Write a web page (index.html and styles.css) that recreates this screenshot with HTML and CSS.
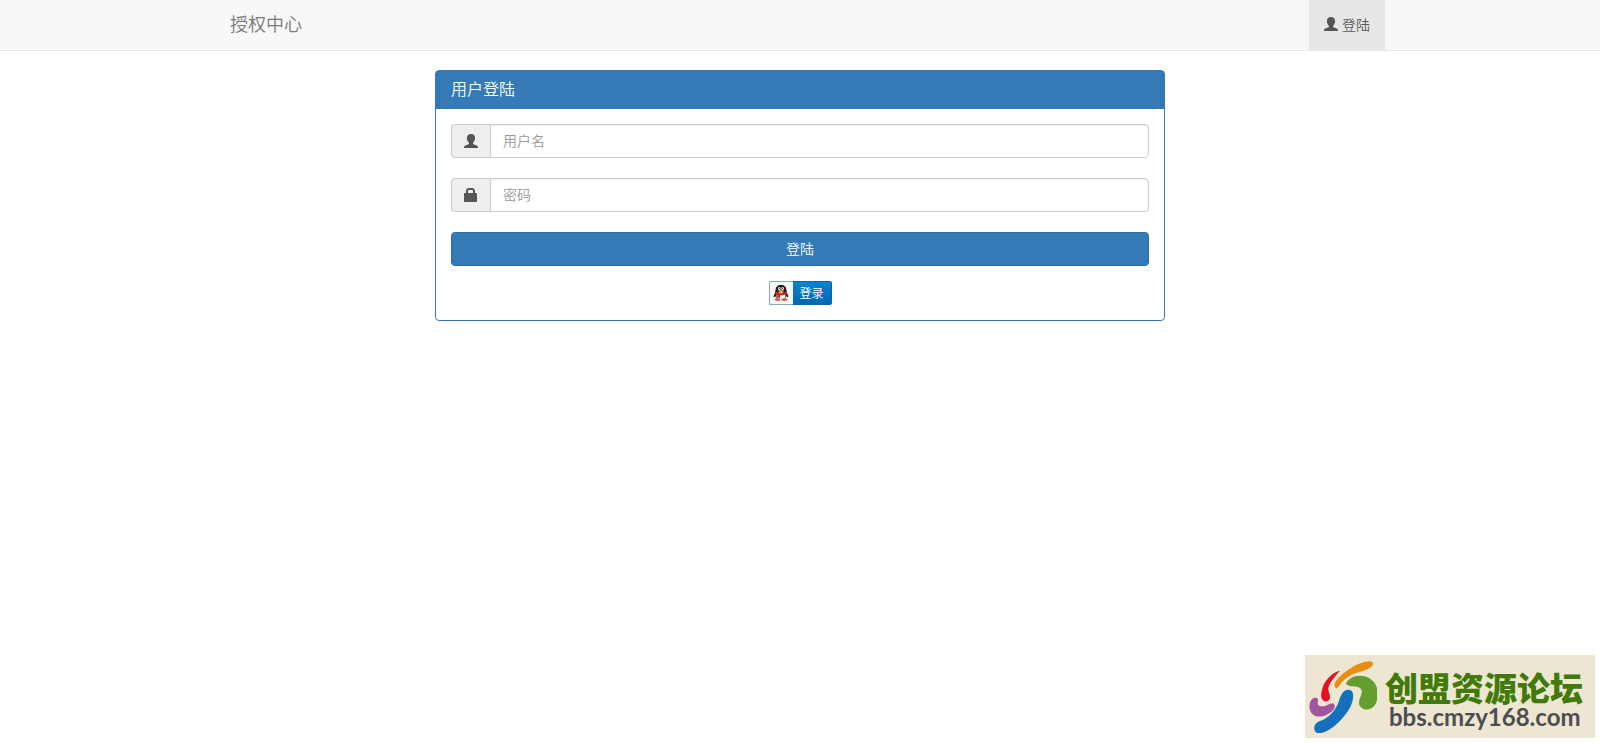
FILE: index.html
```html
<!DOCTYPE html>
<html lang="zh-CN">
<head>
  <meta charset="UTF-8">
  <meta name="viewport" content="width=device-width, initial-scale=1">
  <title>用户登陆</title>
  <link rel="stylesheet" href="styles.css">
</head>
<body>

  <svg width="0" height="0" class="sprite" aria-hidden="true">
    <symbol id="icon-user" viewBox="0 0 14 14">
      <path d="M7 0C9.5 0 11 1.4 11 3.6C11 4 11 4.2 10.9 4.5C11.3 4.6 11.3 5.8 10.6 6.3C10.3 7.4 9.8 8.2 9.1 8.8V10C9.4 10.5 11.3 10.9 12.6 11.5C13.5 11.9 14 12.4 14 14H0C0 12.4 .5 11.9 1.4 11.5C2.7 10.9 4.6 10.5 4.9 10V8.8C4.2 8.2 3.7 7.4 3.4 6.3C2.7 5.8 2.7 4.6 3.1 4.5C3 4.2 3 4 3 3.6C3 1.4 4.5 0 7 0Z"/>
    </symbol>
    <symbol id="icon-lock" viewBox="0 0 14 14">
      <path fill-rule="evenodd" d="M2 5V3C2 1 3.4 0 5 0H8C9.600 0 11 1 11 3V5H12.2C12.8 5 13 5.2 13 5.8V13.2C13 13.8 12.8 14 12.2 14H.8C.2 14 0 13.8 0 13.2V5.8C0 5.2 .2 5 .8 5ZM4 5H9V3.400C9 2.500 8.500 2 7.700 2H5.300C4.500 2 4 2.500 4 3.400Z"/>
    </symbol>
  </svg>

  <nav class="navbar">
    <div class="container navbar-inner">
      <a href="#" class="navbar-brand">授权中心</a>
      <a href="#" class="navbar-link active"><svg class="icon"><use href="#icon-user"/></svg> 登陆</a>
    </div>
  </nav>

  <div class="container">
    <div class="login-col">
      <div class="panel">
        <h3 class="panel-heading">用户登陆</h3>
        <form class="panel-body">
          <div class="input-group">
            <label class="input-addon" for="user"><svg class="icon"><use href="#icon-user"/></svg></label>
            <input type="text" id="user" class="form-control" placeholder="用户名" aria-label="用户名">
          </div>
          <div class="input-group">
            <label class="input-addon" for="pass"><svg class="icon"><use href="#icon-lock"/></svg></label>
            <input type="password" id="pass" class="form-control" placeholder="密码" aria-label="密码">
          </div>
          <button type="submit" class="btn">登陆</button>
          <a href="#" class="qq-login">
            <span class="qq-icon">
              <svg width="16" height="18" viewBox="0 0 16 18">
                <path d="M3 8C1.600 9.500 .4 11.500 .8 13C1.600 13.400 2.300 12.800 2.800 12ZM13 8C14.400 9.500 15.600 11.500 15.200 13C14.400 13.400 13.700 12.800 13.200 12Z" fill="#2b1714"/>
                <path d="M8 1C11.400 1 13.400 3 13.400 6C14.600 9 14.200 16 8 16S1.400 9 2.600 6C2.600 3 4.600 1 8 1Z" fill="#1d1a1c"/>
                <ellipse cx="8" cy="12" rx="4.600" ry="4" fill="#fff"/>
                <ellipse cx="6.400" cy="4.400" rx="1.300" ry="1.500" fill="#fff"/>
                <ellipse cx="9.600" cy="4.400" rx="1.300" ry="1.500" fill="#fff"/>
                <circle cx="6.700" cy="4.500" r=".5"/>
                <circle cx="9.300" cy="4.500" r=".5"/>
                <ellipse cx="8" cy="7" rx="3" ry="1" fill="#f39a1e"/>
                <path d="M2.600 7.600C6 9.400 10 9.400 13.400 7.600L13.800 10C11 11.400 9 11.400 7.200 11.200L7 14L4 13.600L4.200 10.800L2.200 10Z" fill="#d3281c"/>
                <ellipse cx="4.600" cy="15.600" rx="3" ry="1.400" fill="#c8602c"/>
                <ellipse cx="11.400" cy="15.600" rx="3" ry="1.400" fill="#c8602c"/>
              </svg>
            </span>
            <span class="qq-text">登录</span>
          </a>
        </form>
      </div>
    </div>
  </div>

  <div class="forum-badge">
    <svg class="forum-logo" width="72" height="76" viewBox="0 0 72 76">
      <path d="M30 30C27 25 38 16 46 11C54 6 66 2 68 6C69 10 62 13 54 15C45 17 38 23 34 29C32 32 31 32 30 30Z" fill="#e98d10"/>
      <path d="M35 14C30 14 22 21 19 27C17 32 15 38 17 42C19 46 25 45 25 40C25 36 22 34 24 29C26 24 31 18 35 14Z" fill="#e3101f"/>
      <path d="M41 27C43 20 55 16 64 21C73 26 75 38 71 46C67 55 56 54 54 47C53 41 60 36 55 31C51 28 46 31 41 27Z" fill="#649e31"/>
      <path d="M12 41C7 39 3 46 5 53C7 60 15 61 21 58C26 56 32 51 29 47C26 44 21 51 15 49C10 47 15 43 12 41Z" fill="#a254a0"/>
      <path d="M45 33C50 34 49 45 43 54C35 66 21 78 12 76C7 73 9 66 15 64C24 61 31 53 34 44C36 37 39 32 45 33Z" fill="#1470bc"/>
    </svg>
    <div class="forum-text">
      <span class="forum-name">创盟资源论坛</span>
      <span class="forum-url">bbs.cmzy168.com</span>
    </div>
  </div>

</body>
</html>
```
FILE: styles.css
```css
* {
  box-sizing: border-box;
}
body {
  margin: 0;
  font-family: "Liberation Sans", "Noto Sans CJK SC", sans-serif;
  font-size: 14px;
  font-weight: 350;
  line-height: 20px;
  color: #333;
  background-color: #fff;
}
a {
  text-decoration: none;
}
.sprite {
  position: absolute;
}
.container {
  max-width: 1170px;
  margin: 0 auto;
  padding: 0 15px;
}
.icon {
  width: 14px;
  height: 14px;
  fill: currentColor;
  vertical-align: -1px;
}

/* navbar */
.navbar {
  background-color: #f8f8f8;
  border-bottom: 1px solid #e7e7e7;
  margin-bottom: 19px;
}
.navbar-inner {
  display: flex;
  justify-content: space-between;
  padding: 0;
}
.navbar-brand {
  padding: 15px;
  font-size: 18px;
  color: #777;
}
.navbar-link {
  padding: 15px;
  color: #555;
}
.navbar-link.active {
  background-color: #e7e7e7;
}

/* login panel */
.login-col {
  width: 66.6667%;
  margin: 0 auto;
  padding: 0 15px;
}
.panel {
  border: 1px solid #337ab7;
  border-radius: 4px;
  box-shadow: 0 1px 1px rgba(0, 0, 0, 0.05);
}
.panel-heading {
  margin: 0;
  padding: 9px 15px;
  font-size: 16px;
  font-weight: 350;
  color: #fff;
  background-color: #337ab7;
}
.panel-body {
  display: flex;
  flex-direction: column;
  padding: 15px;
}
.input-group {
  display: flex;
  height: 34px;
  margin-bottom: 20px;
}
.input-addon {
  display: flex;
  align-items: center;
  padding: 0 12px;
  color: #555;
  background-color: #eee;
  border: 1px solid #ccc;
  border-right: 0;
  border-radius: 4px 0 0 4px;
}
.form-control {
  flex: 1;
  min-width: 0;
  padding: 6px 12px;
  font: inherit;
  color: #555;
  background-color: #fff;
  border: 1px solid #ccc;
  border-radius: 0 4px 4px 0;
  box-shadow: inset 0 1px 1px rgba(0, 0, 0, 0.075);
}
.form-control::placeholder {
  color: #999;
  opacity: 1;
}
.btn {
  height: 34px;
  margin-bottom: 15px;
  font: inherit;
  color: #fff;
  background-color: #337ab7;
  border: 1px solid #2e6da4;
  border-radius: 4px;
  cursor: pointer;
}
.btn:hover {
  background-color: #286090;
}
.qq-login {
  display: flex;
  align-self: center;
  width: 63px;
  height: 24px;
  border: 1px solid #0a65a8;
  border-radius: 2px;
  background: linear-gradient(#0a84d0, #0466b0);
}
.qq-icon {
  display: flex;
  align-items: center;
  justify-content: center;
  width: 24px;
  margin: -1px 0 -1px -1px;
  background-color: #f4f8fb;
  border: 1px solid #8fa9ba;
  border-right: 0;
  border-radius: 2px 0 0 2px;
}
.qq-text {
  flex: 1;
  font-size: 12px;
  line-height: 24px;
  text-align: center;
  color: #fff;
}

/* forum badge in the corner */
.forum-badge {
  position: fixed;
  right: 5px;
  bottom: 5px;
  display: flex;
  width: 290px;
  height: 83px;
  background-color: #ece6d2;
}
.forum-logo {
  margin-top: 2px;
}
.forum-text {
  display: flex;
  flex-direction: column;
  padding: 14px 0 0 8px;
  white-space: nowrap;
}
.forum-name {
  font-family: "Noto Sans CJK SC", sans-serif;
  font-size: 33px;
  font-weight: 900;
  line-height: 36px;
  color: #417a08;
}
.forum-url {
  padding-left: 4px;
  font-family: Lato, sans-serif;
  font-size: 24px;
  font-weight: 700;
  line-height: 24px;
  color: #4d4d4f;
}
```
